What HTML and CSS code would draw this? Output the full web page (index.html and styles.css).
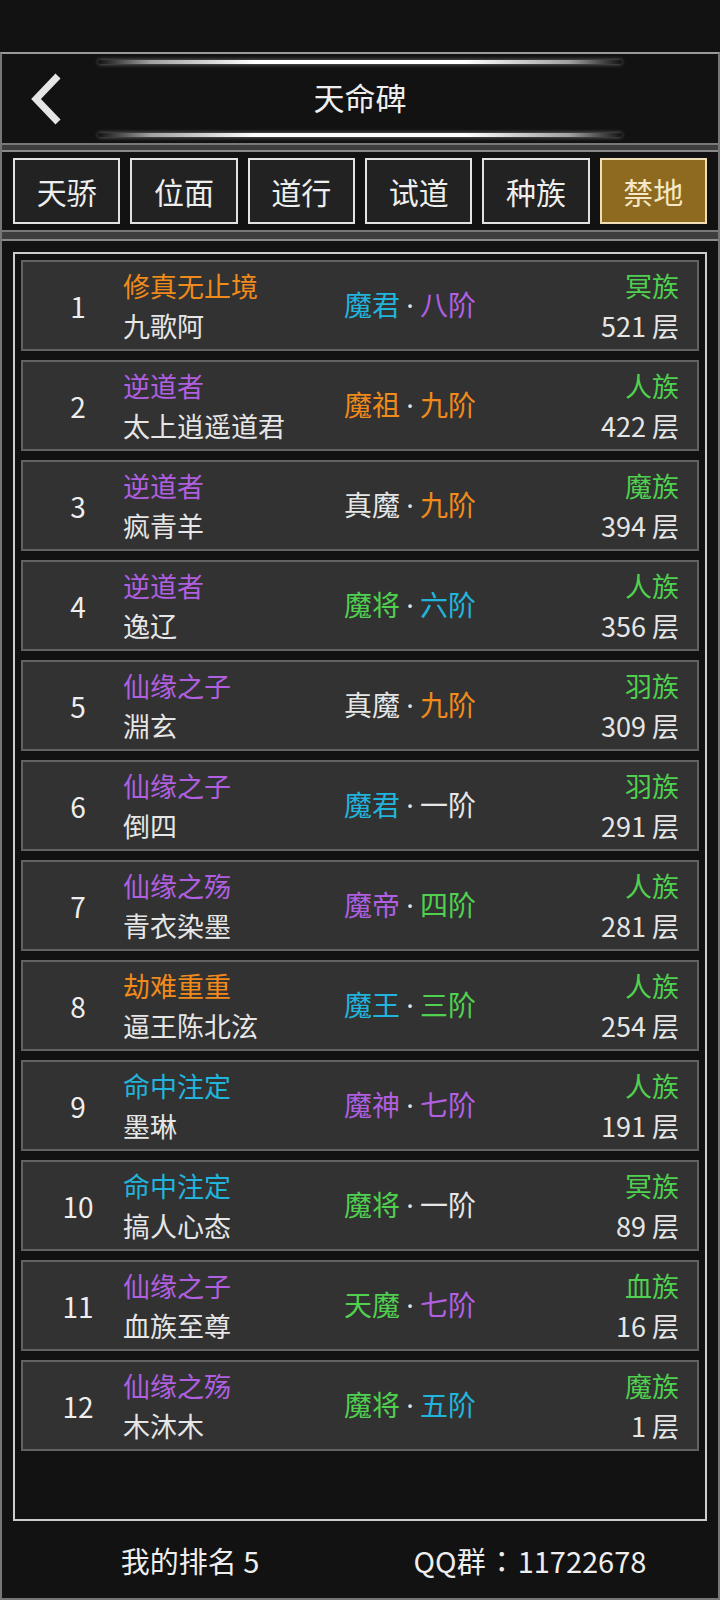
FILE: index.html
```html
<!DOCTYPE html>
<html lang="zh">
<head>
<meta charset="utf-8">
<title>天命碑</title>
<link rel="stylesheet" href="styles.css">
</head>
<body>
<div class="top-band"></div>
<div class="page">
  <header class="header">
    <div class="glow"></div>
    <div class="title-row">
      <div class="back">
        <svg width="40" height="52" viewBox="0 0 40 52"><polyline points="32,3 10,26 32,49" fill="none" stroke="#e6e6e6" stroke-width="7" stroke-linecap="butt" stroke-linejoin="miter"/></svg>
      </div>
      <div class="title">天命碑</div>
      <div></div>
    </div>
    <div class="glow"></div>
  </header>
  <div class="band"></div>
  <nav class="tabs">
    <div class="tab">天骄</div>
    <div class="tab">位面</div>
    <div class="tab">道行</div>
    <div class="tab">试道</div>
    <div class="tab">种族</div>
    <div class="tab active">禁地</div>
  </nav>
  <div class="band band2"></div>
  <div class="list">
    <div class="row"><div class="rank">1</div><div class="who"><div class="c-orange">修真无止境</div><div>九歌阿</div></div><div class="grade"><span class="c-cyan">魔君</span><span class="dot">·</span><span class="c-purple">八阶</span></div><div class="side"><div class="c-green">冥族</div><div>521 层</div></div></div>
    <div class="row"><div class="rank">2</div><div class="who"><div class="c-purple">逆道者</div><div>太上逍遥道君</div></div><div class="grade"><span class="c-orange">魔祖</span><span class="dot">·</span><span class="c-orange">九阶</span></div><div class="side"><div class="c-green">人族</div><div>422 层</div></div></div>
    <div class="row"><div class="rank">3</div><div class="who"><div class="c-purple">逆道者</div><div>疯青羊</div></div><div class="grade"><span>真魔</span><span class="dot">·</span><span class="c-orange">九阶</span></div><div class="side"><div class="c-green">魔族</div><div>394 层</div></div></div>
    <div class="row"><div class="rank">4</div><div class="who"><div class="c-purple">逆道者</div><div>逸辽</div></div><div class="grade"><span class="c-green">魔将</span><span class="dot">·</span><span class="c-cyan">六阶</span></div><div class="side"><div class="c-green">人族</div><div>356 层</div></div></div>
    <div class="row"><div class="rank">5</div><div class="who"><div class="c-purple">仙缘之子</div><div>淵玄</div></div><div class="grade"><span>真魔</span><span class="dot">·</span><span class="c-orange">九阶</span></div><div class="side"><div class="c-green">羽族</div><div>309 层</div></div></div>
    <div class="row"><div class="rank">6</div><div class="who"><div class="c-purple">仙缘之子</div><div>倒四</div></div><div class="grade"><span class="c-cyan">魔君</span><span class="dot">·</span><span>一阶</span></div><div class="side"><div class="c-green">羽族</div><div>291 层</div></div></div>
    <div class="row"><div class="rank">7</div><div class="who"><div class="c-purple">仙缘之殇</div><div>青衣染墨</div></div><div class="grade"><span class="c-purple">魔帝</span><span class="dot">·</span><span class="c-green">四阶</span></div><div class="side"><div class="c-green">人族</div><div>281 层</div></div></div>
    <div class="row"><div class="rank">8</div><div class="who"><div class="c-orange">劫难重重</div><div>逼王陈北泫</div></div><div class="grade"><span class="c-cyan">魔王</span><span class="dot">·</span><span class="c-green">三阶</span></div><div class="side"><div class="c-green">人族</div><div>254 层</div></div></div>
    <div class="row"><div class="rank">9</div><div class="who"><div class="c-cyan">命中注定</div><div>墨琳</div></div><div class="grade"><span class="c-purple">魔神</span><span class="dot">·</span><span class="c-purple">七阶</span></div><div class="side"><div class="c-green">人族</div><div>191 层</div></div></div>
    <div class="row"><div class="rank">10</div><div class="who"><div class="c-cyan">命中注定</div><div>搞人心态</div></div><div class="grade"><span class="c-green">魔将</span><span class="dot">·</span><span>一阶</span></div><div class="side"><div class="c-green">冥族</div><div>89 层</div></div></div>
    <div class="row"><div class="rank">11</div><div class="who"><div class="c-purple">仙缘之子</div><div>血族至尊</div></div><div class="grade"><span class="c-green">天魔</span><span class="dot">·</span><span class="c-purple">七阶</span></div><div class="side"><div class="c-green">血族</div><div>16 层</div></div></div>
    <div class="row"><div class="rank">12</div><div class="who"><div class="c-purple">仙缘之殇</div><div>木沐木</div></div><div class="grade"><span class="c-green">魔将</span><span class="dot">·</span><span class="c-cyan">五阶</span></div><div class="side"><div class="c-green">魔族</div><div>1 层</div></div></div>
  </div>
  <footer class="footer">
    <div class="foot-cell">我的排名 5</div>
    <div class="foot-cell">QQ群<span class="colon">：</span>11722678</div>
  </footer>
</div>
</body>
</html>
```
FILE: styles.css
```css
* { box-sizing: border-box; }
html, body {
  margin: 0;
  padding: 0;
  background: #121212;
}
body {
  width: 720px;
  height: 1600px;
  font-family: "Noto Sans CJK SC", "Noto Sans", sans-serif;
  color: #e6e6e6;
  overflow: hidden;
}
.top-band {
  height: 52px;
  background: #121212;
}
.page {
  height: 1548px;
  display: flex;
  flex-direction: column;
  border: 2px solid #767676;
  border-top-color: #9a9a9a;
  background: #121212;
}
.header {
  height: 89px;
  padding-top: 6px;
  display: flex;
  flex-direction: column;
  align-items: center;
}
.glow {
  width: 524px;
  height: 4px;
  border-radius: 2px;
  background: linear-gradient(90deg, rgba(255,255,255,0) 0%, rgba(255,255,255,0.6) 10%, #ffffff 30%, #ffffff 70%, rgba(255,255,255,0.6) 90%, rgba(255,255,255,0) 100%);
  box-shadow: 0 0 4px rgba(255,255,255,0.45);
}
.title-row {
  width: 716px;
  height: 69px;
  display: grid;
  grid-template-columns: 100px 1fr 100px;
  align-items: center;
}
.back {
  padding-left: 24px;
  display: flex;
  align-items: center;
}
.back svg { display: block; }
.title {
  text-align: center;
  font-size: 31px;
  line-height: 40px;
  color: #eeeeee;
  padding-bottom: 3px;
}
.band {
  height: 9px;
  background: #3e3e3e;
  border-top: 2px solid #787878;
  border-bottom: 2px solid #8a8a8a;
}
.band2 {
  height: 11px;
}
.tabs {
  display: flex;
  gap: 10px;
  padding: 6px 11px;
}
.tab {
  flex: 1;
  height: 66px;
  border: 2px solid #e2e2e2;
  background: #222222;
  color: #eeeeee;
  font-size: 30px;
  display: flex;
  align-items: center;
  justify-content: center;
}
.tab.active {
  background: #8d6a1f;
  border-color: #f0dfb6;
  color: #f6e8c6;
}
.list {
  flex: 1;
  margin: 11px 11px 0;
  border: 2px solid #cdcdcd;
  padding: 6px;
  display: flex;
  flex-direction: column;
  gap: 9px;
}
.row {
  height: 91px;
  flex: none;
  background: #323232;
  border: 2px solid #626262;
  display: grid;
  grid-template-columns: 80px 213px 138px 1fr;
  column-gap: 5px;
  align-items: center;
  padding: 0 18px 0 15px;
}
.rank {
  text-align: center;
  font-size: 28px;
  color: #eeeeee;
}
.who, .side {
  font-size: 27px;
  line-height: 40px;
  white-space: nowrap;
}
.side {
  text-align: right;
}
.grade {
  text-align: center;
  font-size: 28px;
  color: #e6e6e6;
  white-space: nowrap;
  padding-bottom: 3px;
}
.dot {
  display: inline-block;
  width: 20px;
  text-align: center;
  font-family: "Noto Sans", sans-serif;
  color: #e6e6e6;
}
.c-orange { color: #f08a1b; }
.c-purple { color: #b05fe0; }
.c-cyan { color: #21b4dc; }
.c-green { color: #4fd04f; }
.footer {
  height: 77px;
  display: flex;
  align-items: center;
  padding: 0 18px;
}
.foot-cell {
  flex: 1;
  text-align: center;
  font-size: 29px;
  color: #eeeeee;
}
.colon {
  display: inline-block;
  width: 32px;
  text-align: center;
  font-family: "Noto Sans CJK JP", "Noto Sans CJK SC", sans-serif;
}
```
